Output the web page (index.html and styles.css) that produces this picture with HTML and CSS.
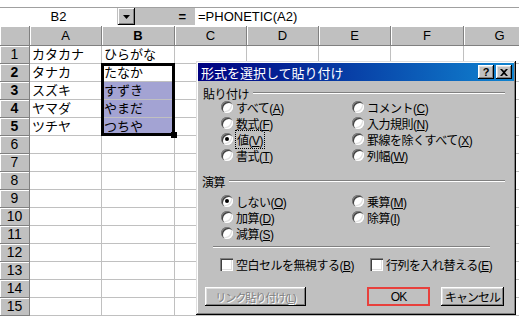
FILE: index.html
```html
<!DOCTYPE html>
<html lang="ja">
  <head>
    <meta charset="UTF-8" />
    <title>形式を選択して貼り付け</title>
    <link rel="stylesheet" href="styles.css">
  </head>
  <body>
    <div class="app">
      <div class="toolstrip"></div>
      <div class="formulabar">
        <div class="namebox">B2</div>
        <div class="dropbtn">
          <svg width="7" height="4" viewBox="0 0 7 4"><path d="M0 0h7L3.5 4z" fill="#000"/></svg>
        </div>
        <div class="eqarea"><span class="eq">=</span></div>
        <div class="formula">=PHONETIC(A2)</div>
      </div>

      <div class="sheet">
        <div class="grid">
          <div class="hd corner"></div>
          <div class="hd">A</div><div class="hd on">B</div><div class="hd">C</div><div class="hd">D</div>
          <div class="hd">E</div><div class="hd">F</div><div class="hd">G</div>

          <div class="hd rh">1</div><div class="cell">カタカナ</div><div class="cell">ひらがな</div>
          <div class="cell"></div><div class="cell"></div><div class="cell"></div><div class="cell"></div><div class="cell"></div>

          <div class="hd rh on">2</div><div class="cell">タナカ</div><div class="cell">たなか</div>
          <div class="cell"></div><div class="cell"></div><div class="cell"></div><div class="cell"></div><div class="cell"></div>

          <div class="hd rh on">3</div><div class="cell">スズキ</div><div class="cell hl">すずき</div>
          <div class="cell"></div><div class="cell"></div><div class="cell"></div><div class="cell"></div><div class="cell"></div>

          <div class="hd rh on">4</div><div class="cell">ヤマダ</div><div class="cell hl">やまだ</div>
          <div class="cell"></div><div class="cell"></div><div class="cell"></div><div class="cell"></div><div class="cell"></div>

          <div class="hd rh on">5</div><div class="cell">ツチヤ</div><div class="cell hl">つちや</div>
          <div class="cell"></div><div class="cell"></div><div class="cell"></div><div class="cell"></div><div class="cell"></div>

          <div class="hd rh">6</div><div class="cell"></div><div class="cell"></div>
          <div class="cell"></div><div class="cell"></div><div class="cell"></div><div class="cell"></div><div class="cell"></div>
          <div class="hd rh">7</div><div class="cell"></div><div class="cell"></div>
          <div class="cell"></div><div class="cell"></div><div class="cell"></div><div class="cell"></div><div class="cell"></div>
          <div class="hd rh">8</div><div class="cell"></div><div class="cell"></div>
          <div class="cell"></div><div class="cell"></div><div class="cell"></div><div class="cell"></div><div class="cell"></div>
          <div class="hd rh">9</div><div class="cell"></div><div class="cell"></div>
          <div class="cell"></div><div class="cell"></div><div class="cell"></div><div class="cell"></div><div class="cell"></div>
          <div class="hd rh">10</div><div class="cell"></div><div class="cell"></div>
          <div class="cell"></div><div class="cell"></div><div class="cell"></div><div class="cell"></div><div class="cell"></div>
          <div class="hd rh">11</div><div class="cell"></div><div class="cell"></div>
          <div class="cell"></div><div class="cell"></div><div class="cell"></div><div class="cell"></div><div class="cell"></div>
          <div class="hd rh">12</div><div class="cell"></div><div class="cell"></div>
          <div class="cell"></div><div class="cell"></div><div class="cell"></div><div class="cell"></div><div class="cell"></div>
          <div class="hd rh">13</div><div class="cell"></div><div class="cell"></div>
          <div class="cell"></div><div class="cell"></div><div class="cell"></div><div class="cell"></div><div class="cell"></div>
          <div class="hd rh">14</div><div class="cell"></div><div class="cell"></div>
          <div class="cell"></div><div class="cell"></div><div class="cell"></div><div class="cell"></div><div class="cell"></div>
          <div class="hd rh">15</div><div class="cell"></div><div class="cell"></div>
          <div class="cell"></div><div class="cell"></div><div class="cell"></div><div class="cell"></div><div class="cell"></div>
        </div>
        <!-- selected range B2:B5 -->
        <div class="selection"><span class="handle"></span></div>
      </div>

      <div class="dialog">
        <div class="titlebar">
          <span class="title">形式を選択して貼り付け</span>
          <span class="tbtn help">?</span>
          <span class="tbtn close">
            <svg width="8" height="7" viewBox="0 0 8 7"><path d="M0 0h2l2 2 2-2h2L5 3.5 8 7H6L4 5 2 7H0l3-3.5z" fill="#000"/></svg>
          </span>
        </div>

        <div class="body">
          <div class="grouphead">貼り付け</div>
          <div class="opts">
            <label class="radio"><span class="dot"></span><span>すべて(<u>A</u>)</span></label>
            <label class="radio"><span class="dot"></span><span>コメント(<u>C</u>)</span></label>
            <label class="radio"><span class="dot"></span><span>数式(<u>F</u>)</span></label>
            <label class="radio"><span class="dot"></span><span>入力規則(<u>N</u>)</span></label>
            <label class="radio"><span class="dot checked"></span><span class="focus">値(<u>V</u>)</span></label>
            <label class="radio"><span class="dot"></span><span>罫線を除くすべて(<u>X</u>)</span></label>
            <label class="radio"><span class="dot"></span><span>書式(<u>T</u>)</span></label>
            <label class="radio"><span class="dot"></span><span>列幅(<u>W</u>)</span></label>
          </div>

          <div class="grouphead second">演算</div>
          <div class="opts ops">
            <label class="radio"><span class="dot checked"></span><span>しない(<u>O</u>)</span></label>
            <label class="radio"><span class="dot"></span><span>乗算(<u>M</u>)</span></label>
            <label class="radio"><span class="dot"></span><span>加算(<u>D</u>)</span></label>
            <label class="radio"><span class="dot"></span><span>除算(<u>I</u>)</span></label>
            <label class="radio"><span class="dot"></span><span>減算(<u>S</u>)</span></label>
          </div>

          <div class="separator"></div>

          <div class="checks">
            <label class="check first"><span class="box"></span><span>空白セルを無視する(<u>B</u>)</span></label>
            <label class="check"><span class="box"></span><span>行列を入れ替える(<u>E</u>)</span></label>
          </div>

          <div class="buttons">
            <span class="btn link disabled"><span>リンク貼り付け(<u>L</u>)</span></span>
            <span class="btn ok">OK</span>
            <span class="btn cancel">キャンセル</span>
          </div>
        </div>
      </div>
    </div>
  </body>
</html>
```

FILE: styles.css
```css
body {
  margin: 0;
  background-color: #fff;
  font-family: "Liberation Sans", "Noto Sans CJK JP", sans-serif;
}

.app {
  position: relative;
  width: 519px;
  height: 316px;
  overflow: hidden;
}

/* formula bar */

.toolstrip {
  height: 7px;
  border-bottom: 1px solid #a0a0a0;
}

.formulabar {
  display: flex;
  height: 17px;
  background-color: #c0c0c0;
  font-size: 13px;
  line-height: 17px;
}

.namebox {
  width: 117px;
  background-color: #fff;
  text-align: center;
}

.dropbtn {
  width: 17px;
  margin-left: 1px;
  display: flex;
  align-items: center;
  justify-content: center;
  box-sizing: border-box;
  box-shadow: inset -1px -1px #000, inset 1px 1px #fff, inset -2px -2px #808080;
}

.eqarea {
  width: 60px;
  display: flex;
  justify-content: flex-end;
  padding-right: 9px;
  box-sizing: border-box;
}

.eq {
  font-weight: bold;
}

.formula {
  flex: 1;
  background-color: #fff;
  padding-left: 3px;
}

/* sheet */

.sheet {
  position: relative;
  margin-top: 1px;
}

.grid {
  display: grid;
  grid-template-columns: 30px 72px 73px 72px 72px 72px 73px 72px;
  grid-template-rows: 20px;
  grid-auto-rows: 18px;
  font-size: 13px;
}

.grid > div {
  box-sizing: border-box;
  white-space: nowrap;
  overflow: hidden;
}

.hd {
  background-color: #c0c0c0;
  border-right: 1px solid #808080;
  border-bottom: 1px solid #808080;
  box-shadow: inset 1px 1px #fff;
  text-align: center;
  line-height: 19px;
}

.rh {
  line-height: 17px;
  font-size: 14px;
}

.hd.on {
  font-weight: bold;
}

.cell {
  border-right: 1px solid #c0c0c0;
  border-bottom: 1px solid #c0c0c0;
  padding-left: 2px;
  line-height: 17px;
}

.cell.hl {
  background-color: #a3a3d3;
}

.selection {
  position: absolute;
  left: 101px;
  top: 37px;
  width: 74px;
  height: 73px;
  box-sizing: border-box;
  border: 3px solid #000;
}

.handle {
  position: absolute;
  right: -5px;
  bottom: -5px;
  width: 6px;
  height: 6px;
  background-color: #000;
}

/* dialog */

.dialog {
  position: absolute;
  left: 196px;
  top: 61px;
  width: 320px;
  height: 254px;
  box-sizing: border-box;
  padding: 2px;
  background-color: #c0c0c0;
  box-shadow: inset -1px -1px #000, inset 1px 1px #dfdfdf, inset -2px -2px #808080, inset 2px 2px #fff;
  font-size: 12px;
}

.titlebar {
  display: flex;
  align-items: center;
  height: 18px;
  padding: 0 2px 0 3px;
  background: linear-gradient(to right, #000080, #1084d0);
  color: #fff;
  font-size: 13px;
}

.title {
  flex: 1;
}

.tbtn {
  width: 16px;
  height: 14px;
  box-sizing: border-box;
  display: flex;
  align-items: center;
  justify-content: center;
  background-color: #c0c0c0;
  color: #000;
  box-shadow: inset -1px -1px #000, inset 1px 1px #fff, inset -2px -2px #808080, inset 2px 2px #dfdfdf;
  font-weight: bold;
  font-size: 11px;
}

.tbtn.close {
  margin-left: 2px;
}

.body {
  padding-top: 6px;
  letter-spacing: -0.5px;
}

.grouphead {
  display: flex;
  align-items: center;
  gap: 4px;
  height: 12px;
  padding: 0 9px 0 5px;
}

.grouphead::after {
  content: "";
  flex: 1;
  border-top: 1px solid #808080;
  border-bottom: 1px solid #fff;
}

.grouphead.second {
  margin-top: 12px;
  padding-left: 4px;
}

.opts {
  display: grid;
  grid-template-columns: 131px auto;
  grid-auto-rows: 16px;
  padding-left: 23px;
}

.opts.ops {
  margin-top: 6px;
}

.radio {
  display: flex;
  align-items: center;
  gap: 3px;
}

.dot {
  position: relative;
  width: 12px;
  height: 12px;
  border-radius: 50%;
  background-color: #fff;
  box-shadow: inset 1px 1px #808080, inset 2px 2px #404040, inset -1px -1px #fff, inset -2px -2px #dfdfdf;
}

.dot.checked::after {
  content: "";
  position: absolute;
  left: 4px;
  top: 4px;
  width: 4px;
  height: 4px;
  border-radius: 50%;
  background-color: #000;
}

.focus {
  outline: 1px dotted #000;
  padding: 0 1px;
}

.separator {
  margin: 5px 0 0 15px;
  width: 277px;
  border-top: 1px solid #808080;
  border-bottom: 1px solid #fff;
}

.checks {
  display: flex;
  height: 16px;
  margin-top: 8px;
  padding-left: 22px;
}

.check {
  display: flex;
  align-items: center;
  gap: 3px;
}

.check.first {
  width: 150px;
}

.box {
  width: 13px;
  height: 13px;
  background-color: #fff;
  box-shadow: inset 1px 1px #808080, inset 2px 2px #404040, inset -1px -1px #fff, inset -2px -2px #dfdfdf;
}

.buttons {
  display: flex;
  margin-top: 15px;
  padding-left: 7px;
  letter-spacing: -1px;
}

.btn {
  height: 19px;
  box-sizing: border-box;
  display: flex;
  align-items: center;
  justify-content: center;
  box-shadow: inset -1px -1px #000, inset 1px 1px #fff, inset -2px -2px #808080, inset 2px 2px #dfdfdf;
}

.btn.link {
  width: 101px;
  font-size: 11px;
}

.btn.disabled {
  color: #808080;
  text-shadow: 1px 1px #fff;
}

.btn.ok {
  width: 63px;
  margin-left: 61px;
  box-shadow: none;
  border: 2px solid #e8403c;
}

.btn.cancel {
  width: 63px;
  margin-left: 11px;
}
```
